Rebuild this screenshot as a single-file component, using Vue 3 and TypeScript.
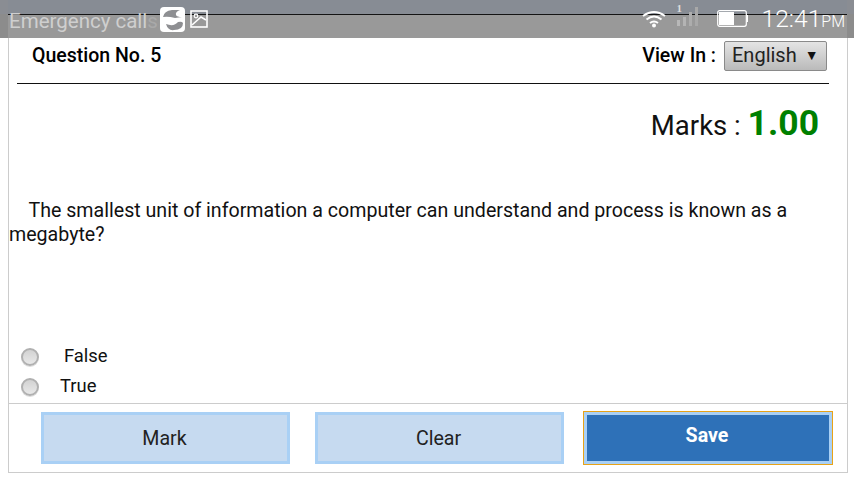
<template>
  <div class="page">
    <div class="status-bar">
      <div class="status-left">
        <span class="carrier">Emergency call<span class="carrier-end">s</span></span>
        <svg class="app-icon" width="25" height="25" viewBox="0 0 25 25">
          <rect x="0" y="0" width="25" height="25" rx="4" fill="#fff" />
          <path d="M3 10 Q4 4 12 3 L20 3 Q15 5 16 8 Q17 10 22 10 L15 11 Q8 9 3 10Z" fill="#8e8f92" />
          <path d="M6 17 Q14 20 18 15 Q22 14 23 16 Q23 23 14 23 Q8 24 6 17Z" fill="#8e8f92" />
        </svg>
        <svg class="pic-icon" width="18" height="18" viewBox="0 0 18 18">
          <rect x="1" y="1" width="16" height="16" fill="none" stroke="#fff" stroke-width="1.6" />
          <circle cx="6" cy="6" r="1.8" fill="none" stroke="#fff" stroke-width="1.2" />
          <path d="M2 15 L11 7 L16 10" fill="none" stroke="#fff" stroke-width="1.6" />
        </svg>
      </div>
      <div class="status-right">
        <svg class="wifi" width="24" height="18" viewBox="0 0 24 18">
          <path d="M1 6 Q12 -2 23 6 M4.5 9.5 Q12 3.5 19.5 9.5 M8 13 Q12 10 16 13" fill="none" stroke="#fff" stroke-width="2" />
          <circle cx="12" cy="15.5" r="2" fill="#fff" />
        </svg>
        <div class="signal">
          <span class="signal-num">1</span>
          <svg width="22" height="20" viewBox="0 0 22 20">
            <rect x="0" y="13" width="3" height="6" fill="#b8b8b8" />
            <rect x="6" y="10" width="3" height="9" fill="#b4b4b4" />
            <rect x="12" y="5" width="3" height="14" fill="#adadad" />
            <rect x="18" y="0" width="3" height="19" fill="#a8a8a8" />
          </svg>
        </div>
        <svg class="battery" width="31" height="17" viewBox="0 0 31 17">
          <rect x="0.7" y="0.7" width="28.6" height="15.6" rx="2" fill="none" stroke="#fff" stroke-width="1.2" />
          <rect x="2" y="2" width="15" height="13" fill="#fff" />
          <rect x="29.5" y="5" width="1.5" height="7" fill="#fff" />
        </svg>
        <span class="clock">12:41<small>PM</small></span>
      </div>
    </div>

    <div class="card">
      <header class="head">
        <strong class="qno">Question No. 5</strong>
        <div class="view-in">
          <strong>View In :</strong>
          <span class="lang">English <i class="caret">▼</i></span>
        </div>
      </header>

      <div class="marks">Marks : <b>1.00</b></div>

      <p class="question">&nbsp;&nbsp;&nbsp;&nbsp;The smallest unit of information a computer can understand and process is known as a megabyte?</p>

      <div class="options">
        <label v-for="opt in options" :key="opt.text" class="option">
          <span class="radio"></span>
          <span :class="opt.cls">{{ opt.text }}</span>
        </label>
      </div>

      <footer class="actions">
        <button class="btn">Mark</button>
        <button class="btn">Clear</button>
        <button class="btn save">Save</button>
      </footer>
    </div>
  </div>
</template>

<script setup lang="ts">
interface Option {
  text: string;
  cls: string;
}

const options: Option[] = [
  { text: 'False', cls: 'opt-false' },
  { text: 'True', cls: 'opt-true' }
];
</script>

<style>
body {
  margin: 0;
  background: #fff;
}
</style>

<style scoped>
.page {
  position: relative;
  width: 854px;
  height: 480px;
  overflow: hidden;
  font-family: Roboto, "Liberation Sans", sans-serif;
  color: #111;
}

.status-bar {
  position: absolute;
  top: 0;
  left: 0;
  width: 854px;
  height: 38px;
  display: flex;
  justify-content: space-between;
  box-sizing: border-box;
  padding: 0 9px 0 9px;
  background:
    linear-gradient(#141414, #141414) 8px 14px / 839px 1px no-repeat,
    linear-gradient(#8a8d93 14px, #8c8c8c 14px) 0 0 / 8px 38px no-repeat,
    linear-gradient(#8a8d93 14px, #8c8c8c 14px) 847px 0 / 7px 38px no-repeat,
    linear-gradient(#878c94 14px, #999 14px);
  color: #fff;
}

.status-left {
  display: flex;
  align-items: flex-start;
}

.carrier {
  flex: none;
  width: 151px;
  font-size: 20.5px;
  line-height: 38px;
  padding-top: 2px;
  color: #cfcfcf;
  white-space: nowrap;
}

.carrier-end {
  color: #a9a9a9;
}

.app-icon {
  flex: none;
  margin-top: 7px;
}

.pic-icon {
  flex: none;
  margin: 10px 0 0 5px;
}

.status-right {
  display: flex;
  align-items: flex-start;
}

.status-right svg {
  display: block;
}

.wifi {
  margin-top: 10px;
}

.signal {
  position: relative;
  margin: 7px 0 0 11px;
}

.signal-num {
  position: absolute;
  top: -5px;
  left: 0;
  font: bold 11px "Liberation Serif", serif;
  color: #ddd;
}

.battery {
  margin: 10px 0 0 18px;
}

.clock {
  margin-left: 14px;
  font-size: 24.6px;
  font-weight: 300;
  line-height: 38px;
}

.clock small {
  font-size: 16px;
}

.card {
  box-sizing: border-box;
  width: 840px;
  height: 473px;
  margin-left: 8px;
  border: 1px solid #ccc;
  border-top: none;
  display: flex;
  flex-direction: column;
}

.head {
  display: flex;
  justify-content: space-between;
  align-items: center;
  box-sizing: border-box;
  height: 84px;
  margin: 0 18px 0 8px;
  padding: 28px 2px 0 15px;
  border-bottom: 1px solid #111;
  font-size: 19.5px;
}

.qno,
.view-in strong {
  font-weight: 500;
  color: #000;
}

.view-in {
  display: flex;
  align-items: center;
  gap: 8px;
}

.lang {
  box-sizing: border-box;
  width: 103px;
  height: 30px;
  padding-left: 7px;
  line-height: 27px;
  font-size: 20px;
  border: 1px solid #8a8a8a;
  border-radius: 2px;
  background: linear-gradient(#e4e4e4, #bababa);
  color: #222;
  white-space: nowrap;
}

.caret {
  font-style: normal;
  font-size: 14px;
  margin-left: 3px;
  vertical-align: 2px;
  color: #111;
}

.marks {
  text-align: right;
  margin: 17px 28px 0 0;
  font-size: 27.5px;
  line-height: 44px;
  color: #111;
}

.marks b {
  color: #008000;
  font-size: 35.5px;
  font-weight: 700;
}

.question {
  margin: 51px 0 0;
  font-size: 19.63px;
  line-height: 24px;
  color: #111;
}

.options {
  margin-top: 93px;
  padding-left: 12px;
  display: flex;
  flex-direction: column;
}

.option {
  display: flex;
  align-items: center;
  height: 30px;
  font-size: 18.4px;
}

.radio {
  box-sizing: border-box;
  width: 18px;
  height: 18px;
  border: 2px solid #b0b0b0;
  border-radius: 50%;
  background: linear-gradient(#d2d2d2, #e8e8e8);
  margin-top: 4px;
  box-shadow: 0 1px 0 #ddd;
}

.opt-false {
  margin-left: 25px;
}

.opt-true {
  margin-left: 21px;
}

.actions {
  flex: 1;
  display: flex;
  align-items: flex-start;
  gap: 25px;
  margin-top: 3px;
  padding: 8px 0 0 32px;
  border-top: 1px solid #ccc;
}

.btn {
  box-sizing: border-box;
  width: 249px;
  height: 52px;
  padding: 0 8px 0 6px;
  border: 3px solid #a9d0f5;
  background: #c6daf0;
  color: #222;
  font-family: inherit;
  font-size: 19.6px;
}

.save {
  width: 248px;
  margin-left: -5px;
  padding-bottom: 5px;
  background: #2e71b8;
  color: #fff;
  font-weight: 700;
  font-size: 19.6px;
  outline: 1px solid #e8a317;
}
</style>
